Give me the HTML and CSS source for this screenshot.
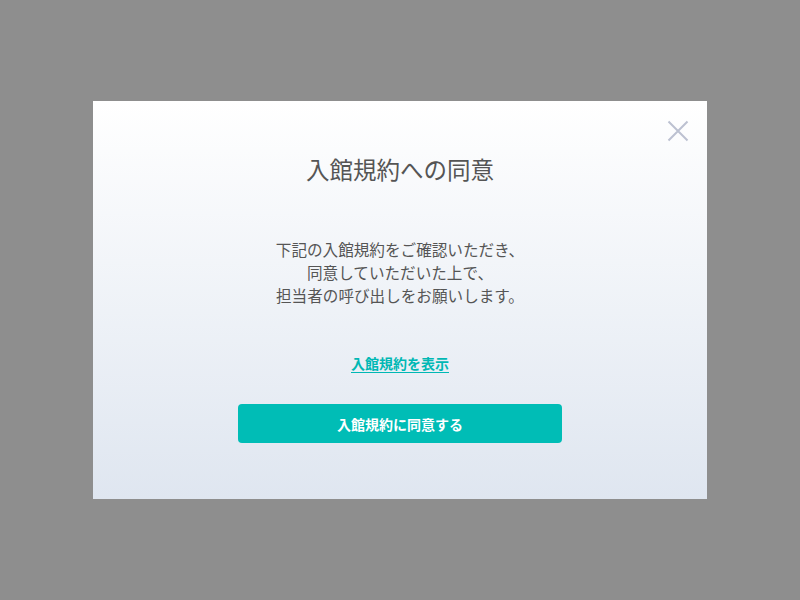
FILE: index.html
```html
<!DOCTYPE html>
<html lang="ja">
<head>
<meta charset="utf-8">
<link rel="stylesheet" href="styles.css">
</head>
<body>
<div class="overlay">
  <div class="modal">
    <button class="close" aria-label="閉じる">
      <svg width="22" height="22" viewBox="0 0 22 22"><path d="M1.5 1.5 L20.5 20.5 M20.5 1.5 L1.5 20.5" stroke="#bcc1d1" stroke-width="2" fill="none"/></svg>
    </button>
    <h1 class="title">入館規約への同意</h1>
    <p class="desc">下記の入館規約をご確認いただき、<br>同意していただいた上で、<br>担当者の呼び出しをお願いします。</p>
    <a class="link" href="#">入館規約を表示</a>
    <button class="agree">入館規約に同意する</button>
  </div>
</div>
</body>
</html>
```
FILE: styles.css
```css
html, body {
  margin: 0;
  padding: 0;
  height: 100%;
}
body {
  background: #8e8e8e;
  font-family: "Noto Sans CJK JP", "Noto Sans", sans-serif;
}
.overlay {
  height: 100%;
  display: flex;
  align-items: center;
  justify-content: center;
}
.modal {
  position: relative;
  width: 614px;
  height: 398px;
  box-sizing: border-box;
  background: linear-gradient(to bottom, #ffffff 0%, #dfe6f0 100%);
  display: flex;
  flex-direction: column;
  align-items: center;
  padding-top: 52px;
}
.close {
  position: absolute;
  top: 19px;
  right: 18px;
  border: 0;
  padding: 0;
  background: none;
  width: 22px;
  height: 22px;
  cursor: pointer;
}
.close svg { display: block; }
.title {
  margin: 0;
  font-size: 23.5px;
  line-height: 32px;
  font-weight: 400;
  color: #555555;
}
.desc {
  margin: 53px 0 0;
  font-size: 15.6px;
  line-height: 23px;
  color: #555555;
  text-align: center;
}
.link {
  margin-top: 46px;
  font-size: 14px;
  line-height: 20px;
  font-weight: 700;
  color: #00b8b4;
  text-decoration: underline;
  text-underline-offset: 3px;
}
.agree {
  margin-top: 31px;
  width: 324px;
  height: 39px;
  border: 0;
  border-radius: 4px;
  background: #00bdb6;
  color: #ffffff;
  font-family: inherit;
  font-size: 14px;
  font-weight: 700;
  cursor: pointer;
}
```
